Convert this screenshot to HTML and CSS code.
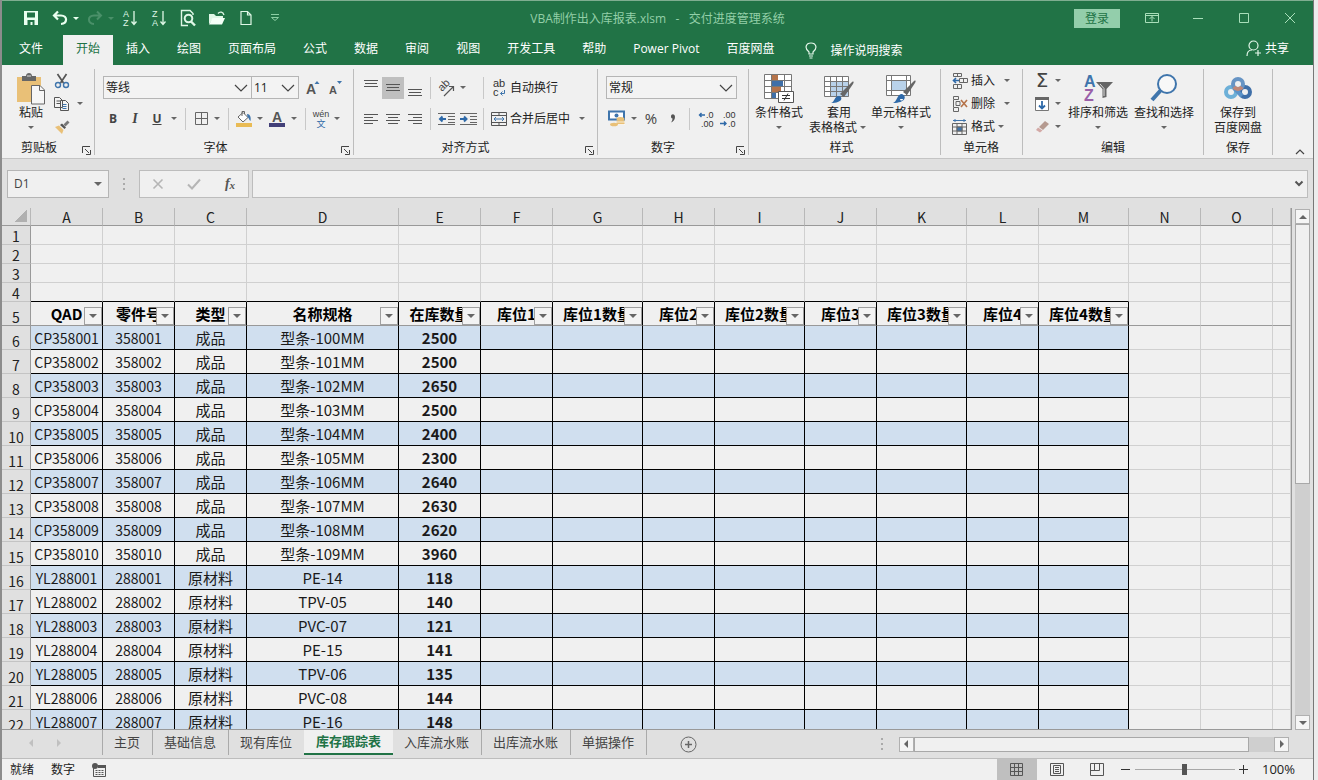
FILE: index.html
```html
<!DOCTYPE html>
<html lang="zh-CN">
<head>
    <meta charset="UTF-8">
    <meta name="viewport" content="width=device-width, initial-scale=1.0">
    <title>VBA制作出入库报表.xlsm - 交付进度管理系统</title>
    <link rel="stylesheet" href="styles.css">
</head>
<body>
    <svg class="symbols" aria-hidden="true">
        <symbol id="launcher" viewBox="0 0 9 9"><path d="M.5 7V.5H8M3 3l4 4M8.500 4v4.500H4" fill="none" stroke="#444"/></symbol>
    </svg>
    <div class="window">
        <header class="titlebar">
            <div class="quick">
                <button class="q" aria-label="保存"><svg width="16" height="16" viewBox="0 0 16 16"><path d="M1 1h14v14H1z" fill="#eafff0"/><path d="M4 2.500h8v5H4zM4.500 10h7v5h-2v-3h-2v3h-3z" fill="#217346"/></svg></button>
                <button class="q undo" aria-label="撤消"><svg width="16" height="16" viewBox="0 0 16 16"><path d="M6 1.500L2 5.500l4 4M2.500 5.500H9c7 0 6.500 8 0 8.500" fill="none" stroke="#eafff0" stroke-width="2.200"/></svg></button>
                <span class="caret light"></span>
                <button class="q redo" aria-label="恢复"><svg width="16" height="16" viewBox="0 0 16 16"><path d="M10 1.500l4 4-4 4M13.500 5.500H7c-7 0-6.500 8 0 8.500" fill="none" stroke="#4a9069" stroke-width="2"/></svg></button>
                <span class="caret dim"></span>
                <button class="q sort" aria-label="升序"><svg class="letters" width="16" height="18" viewBox="0 0 16 18"><text x="1" y="8" fill="#dff7e6">A</text><text x="1" y="17" fill="#dff7e6">Z</text><path d="M12 2v13M9.500 12.500L12 15.500l2.500-3" fill="none" stroke="#dff7e6" stroke-width="1.300"/></svg></button>
                <button class="q sort" aria-label="降序"><svg class="letters" width="16" height="18" viewBox="0 0 16 18"><text x="1" y="8" fill="#dff7e6">Z</text><text x="1" y="17" fill="#dff7e6">A</text><path d="M12 2v13M9.500 12.500L12 15.500l2.500-3" fill="none" stroke="#dff7e6" stroke-width="1.300"/></svg></button>
                <button class="q sort" aria-label="打印预览"><svg width="16" height="18" viewBox="0 0 16 18" fill="none" stroke="#dff7e6" stroke-width="1.400"><path d="M13 6V4.500L10 1.500H1.500v15H8"/><circle cx="8.500" cy="9.500" r="3.800" stroke-width="2"/><path d="M11 12.500l4 4" stroke-width="2.400"/></svg></button>
                <button class="q sort" aria-label="打开"><svg width="18" height="16" viewBox="0 0 18 16"><path d="M1 14V4h5l2 2h7v3H5z" fill="#dff7e6"/><path d="M4.500 8H17L14 14.500H1z" fill="#f4fff7"/><path d="M10 3.500c2-2.500 5-1.500 6 1.500" stroke="#dff7e6" fill="none" stroke-width="1.300"/></svg></button>
                <button class="q sort" aria-label="新建"><svg width="14" height="16" viewBox="0 0 14 16"><path d="M2 1.500h6.500l3.500 3.500v9.500H2zM8.500 1.500V5H12" fill="none" stroke="#dff7e6" stroke-width="1.200"/></svg></button>
                <button class="q sort" aria-label="自定义快速访问工具栏"><svg width="10" height="8" viewBox="0 0 10 8" fill="none" stroke="#8ccfa4"><path d="M1 .5h8M1.500 3.500h7L5 6.500z"/></svg></button>
            </div>
            <div class="title">VBA制作出入库报表.xlsm&nbsp;&nbsp; - &nbsp;&nbsp;交付进度管理系统</div>
            <div class="controls">
                <button class="login">登录</button>
                <button class="ctl" aria-label="功能区显示选项"><svg width="14" height="12" viewBox="0 0 14 12" fill="none" stroke="#a9dfba"><path d="M.5 1.500h13v9H.5zM.5 3.500h13M7 9.500v-5M4.500 7L7 4.500 9.500 7"/></svg></button>
                <button class="ctl" aria-label="最小化"><svg width="12" height="12" viewBox="0 0 12 12"><path d="M1 6.500h10" stroke="#a9dfba"/></svg></button>
                <button class="ctl" aria-label="最大化"><svg width="12" height="12" viewBox="0 0 12 12"><path d="M1.500 1.500h9v9h-9z" fill="none" stroke="#a9dfba"/></svg></button>
                <button class="ctl" aria-label="关闭"><svg width="12" height="12" viewBox="0 0 12 12"><path d="M1 1l10 10M11 1L1 11" stroke="#a9dfba"/></svg></button>
            </div>
        </header>

        <nav class="tabs">
            <button class="tab file">文件</button>
            <button class="tab active">开始</button>
            <button class="tab">插入</button>
            <button class="tab">绘图</button>
            <button class="tab">页面布局</button>
            <button class="tab">公式</button>
            <button class="tab">数据</button>
            <button class="tab">审阅</button>
            <button class="tab">视图</button>
            <button class="tab">开发工具</button>
            <button class="tab">帮助</button>
            <button class="tab">Power Pivot</button>
            <button class="tab">百度网盘</button>
            <button class="tab tell"><svg width="12" height="17" viewBox="0 0 12 17" fill="none" stroke="#e4f7ea" stroke-width="1.200"><path d="M4 12V10C-1 6 1 1 6 1s7 5 2 9v2zM4 14h4M4.500 16h3"/></svg>操作说明搜索</button>
            <button class="tab share"><svg width="16" height="17" viewBox="0 0 16 17" fill="none" stroke="#e4f7ea" stroke-width="1.200"><circle cx="7.500" cy="5.500" r="4.500"/><path d="M1 16c0-4 2-6 5-6M12 10v6M9 13h6"/></svg>共享</button>
        </nav>

        <section class="ribbon">
            <div class="group clipboard">
                <div class="body">
                    <button class="big">
                        <svg width="30" height="32" viewBox="0 0 30 32"><path d="M1 4h24v25H1z" fill="#e9c077"/><path d="M6 8V3h4c0-4 6-4 6 0h4v5z" fill="#666"/><path d="M11 3h4" stroke="#ddd"/><path d="M15.500 12.500h8.500l4.500 4.500v14h-13z" fill="#f6f6f6" stroke="#666"/><path d="M23.500 12.500v5h5" fill="none" stroke="#666"/></svg>
                        <span>粘贴</span><span class="caret"></span>
                    </button>
                    <div class="three">
                        <div class="line"><button aria-label="剪切"><svg width="16" height="16" viewBox="0 0 16 16" fill="none"><path d="M3.500 1l6 9M12.500 1l-6 9" stroke="#555" stroke-width="1.700"/><circle cx="4" cy="12" r="2.500" stroke="#3f75ac" stroke-width="1.400"/><circle cx="12" cy="12" r="2.500" stroke="#3f75ac" stroke-width="1.400"/></svg></button></div>
                        <div class="line"><button aria-label="复制"><svg width="16" height="16" viewBox="0 0 16 16" fill="#f4f4f4" stroke="#555"><path d="M.5 1.500h5l3 3v7h-8zM2.500 5h4M2.500 7.500h4M6.500 4.500h5l3 3v7h-8z"/><path d="M8.500 8.500h4M8.500 10.500h4M8.500 12.500h4" stroke="#3f75ac"/></svg></button><span class="caret"></span></div>
                        <div class="line"><button aria-label="格式刷"><svg width="16" height="16" viewBox="0 0 16 16"><path d="M1 8l4-1.500 4.500 4.500L8 15z" fill="#e9c077"/><path d="M6 6l2-1.500 4 4L10.500 10z" fill="#555"/><path d="M9.500 5.500L13.500 1.500l2 2-4 4z" fill="#777"/></svg></button></div>
                    </div>
                </div>
                <div class="label">剪贴板<button class="launch" aria-label="剪贴板设置"><svg width="9" height="9"><use href="#launcher"/></svg></button></div>
            </div>

            <div class="group font">
                <div class="body two">
                    <div class="line">
                        <select class="combo fontname" aria-label="字体"><option>等线</option></select>
                        <select class="combo fontsize" aria-label="字号"><option>11</option></select>
                        <button class="grow" aria-label="增大字号"><svg class="letters large" width="16" height="18" viewBox="0 0 16 18"><text x="2" y="15" fill="#555">A</text><path d="M10.500 5h5L13 2z" fill="#3f75ac"/></svg></button>
                        <button class="grow" aria-label="减小字号"><svg class="letters medium" width="16" height="18" viewBox="0 0 16 18"><text x="2" y="15" fill="#555">A</text><path d="M10 2h5l-2.500 3z" fill="#3f75ac"/></svg></button>
                    </div>
                    <div class="line">
                        <button class="tool"><b>B</b></button>
                        <button class="tool serif"><i>I</i></button>
                        <button class="tool"><u>U</u></button>
                        <span class="caret"></span><span class="sep"></span>
                        <button class="tool slim" aria-label="边框"><svg width="13" height="13" viewBox="0 0 13 13"><path d="M.5.500h12v12H.5zM6.500 0v13M0 6.500h13" fill="none" stroke="#666"/></svg></button>
                        <span class="caret"></span><span class="sep"></span>
                        <button class="tool slim" aria-label="填充颜色"><svg width="18" height="17" viewBox="0 0 18 17"><path d="M3 7l5-4.500 5 5-5 4.500z" fill="#fff" stroke="#666"/><path d="M7 6V1.500h2.500V4" fill="none" stroke="#666"/><path d="M12 4c4 0 4 5 3.500 7-2-1-1-3-3-4z" fill="#3f75ac"/><path d="M1 13h16v4H1z" fill="#e9bb55"/></svg></button>
                        <span class="caret"></span>
                        <button class="tool" aria-label="字体颜色"><svg class="letters large" width="16" height="17" viewBox="0 0 16 17"><text x="3" y="12" fill="#555">A</text><path d="M0 13h16v4H0z" fill="#423f78"/></svg></button>
                        <span class="caret"></span><span class="sep"></span>
                        <button class="tool slim pinyin"><span>wén</span><span class="wen">文</span></button>
                        <span class="caret"></span>
                    </div>
                </div>
                <div class="label">字体<button class="launch" aria-label="字体设置"><svg width="9" height="9"><use href="#launcher"/></svg></button></div>
            </div>

            <div class="group align">
                <div class="body two">
                    <div class="line">
                        <button class="tool" aria-label="顶端对齐"><svg width="14" height="16" viewBox="0 0 14 16"><path d="M0 .500h14M1 3.500h12M0 6.500h14" stroke="#555"/></svg></button>
                        <button class="tool on" aria-label="垂直居中"><svg width="14" height="16" viewBox="0 0 14 16"><path d="M0 4.500h14M1 7.500h12M0 10.500h14" stroke="#555"/></svg></button>
                        <button class="tool" aria-label="底端对齐"><svg width="14" height="16" viewBox="0 0 14 16"><path d="M0 9.500h14M1 12.500h12M0 15.500h14" stroke="#555"/></svg></button>
                        <span class="sep"></span>
                        <div class="mid"><button class="tool" aria-label="方向"><svg class="letters medium" width="18" height="18" viewBox="0 0 18 18"><text x="0" y="0" transform="translate(5 13) rotate(-45)" fill="#444">ab</text><path d="M7 17l9-9M12 7.500h4.500V12" fill="none" stroke="#555" stroke-width="1.200"/></svg></button><span class="caret"></span></div>
                        <span class="sep"></span>
                        <button class="text"><svg class="letters medium" width="16" height="18" viewBox="0 0 16 18"><text x="2" y="8" fill="#333">ab</text><text x="2" y="17" fill="#333">c</text><path d="M13.500 11v3.500H9.500M11.500 12.500l-2 2 2 2" fill="none" stroke="#3f75ac"/></svg>自动换行</button>
                    </div>
                    <div class="line">
                        <button class="tool" aria-label="左对齐"><svg width="14" height="12" viewBox="0 0 14 12"><path d="M0 1.500h14M0 4.500h9M0 7.500h14M0 10.500h9" stroke="#555"/></svg></button>
                        <button class="tool" aria-label="居中"><svg width="14" height="12" viewBox="0 0 14 12"><path d="M0 1.500h14M2 4.500h10M0 7.500h14M2 10.500h10" stroke="#555"/></svg></button>
                        <button class="tool" aria-label="右对齐"><svg width="14" height="12" viewBox="0 0 14 12"><path d="M0 1.500h14M5 4.500h9M0 7.500h14M5 10.500h9" stroke="#555"/></svg></button>
                        <span class="sep"></span>
                        <div class="mid">
                            <button class="tool" aria-label="减少缩进量"><svg width="17" height="14" viewBox="0 0 17 14"><path d="M0 1.500h17M10 4.500h7M10 7.500h7M10 10.500h7M0 12.500h17" stroke="#666"/><path d="M8 7H2M4.500 4.500L2 7l2.500 2.500" stroke="#2e69a8" stroke-width="2" fill="none"/></svg></button>
                            <button class="tool" aria-label="增加缩进量"><svg width="17" height="14" viewBox="0 0 17 14"><path d="M0 1.500h17M10 4.500h7M10 7.500h7M10 10.500h7M0 12.500h17" stroke="#666"/><path d="M0 7h6M4 4.500L6.500 7 4 9.500" stroke="#2e69a8" stroke-width="2" fill="none"/></svg></button>
                        </div>
                        <span class="sep"></span>
                        <button class="text"><svg width="16" height="16" viewBox="0 0 16 16" fill="none"><path d="M.5 1.500h15v13H.5zM.5 4.500h15M.5 11.500h15M8 1.500v3M8 11.500v3" stroke="#555"/><path d="M3 8h10M5 6L3 8l2 2M11 6l2 2-2 2" stroke="#3f75ac"/></svg>合并后居中</button>
                        <span class="caret after"></span>
                    </div>
                </div>
                <div class="label">对齐方式<button class="launch" aria-label="对齐设置"><svg width="9" height="9"><use href="#launcher"/></svg></button></div>
            </div>

            <div class="group number">
                <div class="body two">
                    <div class="line"><select class="combo format" aria-label="数字格式"><option>常规</option></select></div>
                    <div class="line">
                        <button class="tool" aria-label="会计数字格式"><svg width="18" height="17" viewBox="0 0 18 17"><path d="M1 1.500h15v8H1z" fill="#fff" stroke="#3f75ac" stroke-width="2"/><circle cx="8.500" cy="5.500" r="2" fill="#3f75ac"/><ellipse cx="12.500" cy="9" rx="4" ry="2" fill="#e9c077"/><path d="M8.500 10.500h8v4h-8z" fill="#e9c077"/><path d="M8 12h9M8 14.500h9" stroke="#fff" stroke-width=".7"/><ellipse cx="6" cy="14.500" rx="4" ry="1.800" fill="#e9c077"/></svg></button>
                        <span class="caret"></span>
                        <button class="tool percent">%</button>
                        <button class="tool" aria-label="千位分隔样式"><svg width="8" height="10" viewBox="0 0 8 10"><path d="M2 2.500c0-3 4-3 4 .5 0 3-2 4.500-4 5.500 1-1.500 1.500-2.500 1.500-4C2.500 4.500 2 3.500 2 2.500z" fill="#555"/></svg></button>
                        <span class="sep"></span>
                        <button class="tool" aria-label="增加小数位数"><svg class="letters" width="16" height="16" viewBox="0 0 16 16"><text x="8" y="7" fill="#333">.0</text><text x="3" y="16" fill="#333">.00</text><path d="M7 4H1.500M3.500 2l-2 2 2 2" stroke="#2e69a8" stroke-width="1.400" fill="none"/></svg></button>
                        <button class="tool" aria-label="减少小数位数"><svg class="letters" width="16" height="16" viewBox="0 0 16 16"><text x="3" y="7" fill="#333">.00</text><text x="8" y="16" fill="#333">.0</text><path d="M0 12.500h6M4 10.500l2 2-2 2" stroke="#2e69a8" stroke-width="1.400" fill="none"/></svg></button>
                    </div>
                </div>
                <div class="label">数字<button class="launch" aria-label="数字设置"><svg width="9" height="9"><use href="#launcher"/></svg></button></div>
            </div>

            <div class="group styles">
                <div class="body">
                    <button class="big">
                        <svg width="30" height="32" viewBox="0 0 30 32"><path d="M.5 1.500h27v24H.5zM.5 7.500h27M.5 13.500h27M.5 19.500h27M7.500 1.500v24M20.500 1.500v24" fill="#fff" stroke="#777"/><path d="M8 2h6v5H8zM8 14h9v5H8z" fill="#b5734a"/><path d="M8 8h11v5H8zM8 20h4v5H8z" fill="#3f6fa8"/><path d="M14.500 18.500h15v11h-15z" fill="#fff" stroke="#555"/><path d="M18 22.500h8M18 25.500h8M24 20.500l-4 7" stroke="#333"/></svg>
                        <span>条件格式</span><span class="caret"></span>
                    </button>
                    <button class="big">
                        <svg width="30" height="32" viewBox="0 0 30 32"><path d="M.5 3.500h24v20H.5z" fill="#fff"/><path d="M6 8h19v16H6z" fill="#b9d2ea"/><path d="M.5 3.500h24v20H.5zM.5 8.500h24M.5 13.500h24M.5 18.500h24M6.500 3.500v20M12.500 3.500v20M18.500 3.500v20" fill="none" stroke="#777"/><path d="M16 21L28 9c2-1 2 0 1 2l-9 13z" fill="#666"/><path d="M7 30c4-1 3-7 8-7 4 1 4 7-8 7z" fill="#2e69a8"/></svg>
                        <span>套用</span><span class="two-line">表格格式<span class="caret"></span></span>
                    </button>
                    <button class="big">
                        <svg width="30" height="32" viewBox="0 0 30 32"><path d="M.5 2.500h24v20H.5zM.5 7.500h24M.5 17.500h24M5.500 2.500v20M20.500 2.500v20" fill="#fff" stroke="#777"/><path d="M6 8h14v9H6z" fill="#b9d2ea"/><path d="M17 19L28 8c2-1 2 0 1 2l-8 12z" fill="#666"/><path d="M7 30c4-1 4-9 9-9 5 2 4 9-9 9z" fill="#2e69a8"/><path d="M14 26a1.500 1.500 0 1 0 3 0" fill="#fff"/></svg>
                        <span>单元格样式</span><span class="caret"></span>
                    </button>
                </div>
                <div class="label">样式</div>
            </div>

            <div class="group cells">
                <div class="body">
                    <div class="three">
                        <div class="line"><button class="text"><svg width="16" height="16" viewBox="0 0 16 16" fill="none" stroke="#666"><path d="M1.500 3.500v-3h8v3zM5.500.500v3M1.500 11.500h8v4h-8zM5.500 11v4.500M7.500 5.500h8v4h-8zM11.500 5.500v4"/><path d="M7 7.500H1.500M4 5L1.500 7.500 4 10" stroke="#2e69a8" stroke-width="1.600"/></svg>插入</button><span class="caret far"></span></div>
                        <div class="line"><button class="text"><svg width="16" height="16" viewBox="0 0 16 16" fill="none" stroke="#666"><path d="M1.500 3.500v-3h5v3zM1.500 11.500h5v4h-5zM1.500 4v7M4 5.500h4v4H4z"/><path d="M9 4l6 7M15 4l-6 7" stroke="#b5734a" stroke-width="1.600"/></svg>删除</button><span class="caret far"></span></div>
                        <div class="line"><button class="text"><svg width="16" height="16" viewBox="0 0 16 16" fill="none" stroke="#666"><path d="M.5 4.500h14v11H.5zM.5 8h14M.5 12h14M5 4.500v11M10 4.500v11"/><path d="M1 1.500h13M3 0v3M12 0v3" stroke="#3f75ac"/><path d="M5 8h5v4H5z" fill="#3f75ac"/></svg>格式</button><span class="caret"></span></div>
                    </div>
                </div>
                <div class="label">单元格</div>
            </div>

            <div class="group editing">
                <div class="body">
                    <div class="three">
                        <div class="line"><button class="sum" aria-label="自动求和">Σ</button><span class="caret"></span></div>
                        <div class="line"><button aria-label="填充"><svg width="16" height="16" viewBox="0 0 16 16"><path d="M1.500 1.500h13v13h-13z" fill="#fff" stroke="#777"/><path d="M1 1h14v3H1z" fill="#666"/><path d="M8 5v7.500M5 9.500l3 3 3-3" fill="none" stroke="#2e69a8" stroke-width="1.800"/></svg></button><span class="caret"></span></div>
                        <div class="line"><button aria-label="清除"><svg width="16" height="16" viewBox="0 0 16 16"><path d="M5 8l6-6 4 3-6 6z" fill="#b59a90"/><path d="M4 8.500l4.500 3L6 13.500 2 11z" fill="#d3a9a6"/></svg></button><span class="caret"></span></div>
                    </div>
                    <button class="big">
                        <svg class="letters huge" width="30" height="32" viewBox="0 0 30 32"><text x="1" y="14" fill="#3f75ac">A</text><text x="1" y="28" fill="#9a5fa8">Z</text><path d="M13 9h17l-6.500 7v8l-4 1v-9z" fill="#666"/><path d="M17 11l4 4.500V23" fill="none" stroke="#ddd"/></svg>
                        <span>排序和筛选</span><span class="caret"></span>
                    </button>
                    <button class="big">
                        <svg width="30" height="32" viewBox="0 0 30 32" fill="none" stroke="#3f75ac"><circle cx="18" cy="11" r="9" fill="#f8f8f8" stroke-width="2"/><path d="M12 17L3 27" stroke-width="4"/></svg>
                        <span>查找和选择</span><span class="caret"></span>
                    </button>
                </div>
                <div class="label">编辑</div>
            </div>

            <div class="group save">
                <div class="body">
                    <button class="big">
                        <svg width="30" height="32" viewBox="0 0 30 32" fill="none" stroke-width="4"><circle cx="8" cy="19" r="5" stroke="#6db0d8"/><circle cx="22" cy="19" r="5" stroke="#3f6fa8"/><path d="M11 15l8 8" stroke="#5a92c8"/><circle cx="15" cy="11" r="5" stroke="#6794c4"/><path d="M11 14a5 5 0 0 0 8 0" stroke="#c08878"/></svg>
                        <span>保存到</span><span>百度网盘</span>
                    </button>
                </div>
                <div class="label">保存</div>
            </div>
            <button class="collapse" aria-label="折叠功能区"><svg width="10" height="6" viewBox="0 0 10 6"><path d="M1 5l4-4 4 4" fill="none" stroke="#444" stroke-width="1.200"/></svg></button>
        </section>

        <section class="formula">
            <select class="namebox" aria-label="名称框"><option>D1</option></select>
            <span class="dots"></span>
            <div class="fx">
                <button aria-label="取消"><svg width="12" height="12" viewBox="0 0 12 12"><path d="M1.500 1.500l9 9M10.500 1.500l-9 9" stroke="#b5b5b5" stroke-width="1.600"/></svg></button>
                <button aria-label="输入"><svg width="14" height="12" viewBox="0 0 14 12"><path d="M1 6.500l4 4 8-9" fill="none" stroke="#b5b5b5" stroke-width="2"/></svg></button>
                <button class="fn"><i>f</i><i class="sub">x</i></button>
            </div>
            <div class="entry">
                <input type="text" aria-label="编辑栏">
                <svg width="10" height="8" viewBox="0 0 10 8"><path d="M1.500 1.500L5 5l3.500-3.500" fill="none" stroke="#555" stroke-width="2"/></svg>
            </div>
        </section>

        <main class="sheet">
            <div class="pane">
                <table>
                    <colgroup>
                        <col class="w-head"><col class="w72"><col class="w72"><col class="w72"><col class="w152"><col class="w82">
                        <col class="w72"><col class="w90"><col class="w72"><col class="w90"><col class="w72"><col class="w90">
                        <col class="w72"><col class="w90"><col class="w72"><col class="w72"><col>
                    </colgroup>
                    <thead><tr id="letters"></tr></thead>
                    <tbody id="rows"></tbody>
                </table>
            </div>
            <div class="vscroll">
                <button class="sb" aria-label="向上"><span class="tri up"></span></button>
                <div class="track"><div class="thumb"></div></div>
                <button class="sb" aria-label="向下"><span class="tri down"></span></button>
            </div>
        </main>

        <nav class="sheets">
            <div class="arrows"><span class="tri left"></span><span class="tri right"></span></div>
            <button class="st">主页</button>
            <button class="st">基础信息</button>
            <button class="st before">现有库位</button>
            <button class="st current">库存跟踪表</button>
            <button class="st">入库流水账</button>
            <button class="st">出库流水账</button>
            <button class="st">单据操作</button>
            <button class="add" aria-label="新工作表"><svg width="17" height="17" viewBox="0 0 17 17" fill="none" stroke="#666"><circle cx="8.500" cy="8.500" r="7.500"/><path d="M8.500 5v7M5 8.500h7" stroke-width="1.500"/></svg></button>
            <span class="dots"></span>
            <div class="hscroll">
                <button class="sb" aria-label="向左"><span class="tri left"></span></button>
                <div class="track"><div class="thumb"></div></div>
                <button class="sb" aria-label="向右"><span class="tri right"></span></button>
            </div>
        </nav>

        <footer class="status">
            <span>就绪</span>
            <span>数字</span>
            <svg width="14" height="14" viewBox="0 0 14 14"><path d="M1.500 4v9.500h12v-11H6" fill="none" stroke="#555"/><path d="M6 2h8v3H6z" fill="#555"/><circle cx="3" cy="3" r="3" fill="#555"/><path d="M3.500 7.500h2m1 0h2m1 0h2M3.500 9.500h2m1 0h2m1 0h2M3.500 11.500h2m1 0h2m1 0h2" stroke="#555"/></svg>
            <div class="views">
                <button class="view on" aria-label="普通"><svg width="13" height="13" viewBox="0 0 13 13"><path d="M.5.500h12v12H.5zM4.500 0v13M8.500 0v13M0 4.500h13M0 8.500h13" fill="none" stroke="#555"/></svg></button>
                <button class="view" aria-label="页面布局"><svg width="14" height="13" viewBox="0 0 14 13"><path d="M.5.500h13v12H.5zM3.500 2.500h7v8h-7zM5 4.500h4M5 6.500h4M5 8.500h4" fill="none" stroke="#555"/></svg></button>
                <button class="view" aria-label="分页预览"><svg width="14" height="13" viewBox="0 0 14 13"><path d="M.5.500h13v12H.5zM4.500.500v7M9.500.500v7M.5 7.500h9" fill="none" stroke="#555"/></svg></button>
            </div>
            <button class="zoom" aria-label="缩小"><svg width="9" height="9" viewBox="0 0 9 9"><path d="M0 4.500h9" stroke="#333"/></svg></button>
            <input class="slider" type="range" min="0" max="100" value="50" aria-label="缩放">
            <button class="zoom" aria-label="放大"><svg width="9" height="9" viewBox="0 0 9 9"><path d="M0 4.500h9M4.500 0v9" stroke="#333"/></svg></button>
            <span class="level">100%</span>
        </footer>
    </div>

    <script>
        const headers = ['QAD', '零件号', '类型', '名称规格', '在库数量', '库位1', '库位1数量', '库位2', '库位2数量', '库位3', '库位3数量', '库位4', '库位4数量'];
        const stock = [
            ['CP358001', '358001', '成品', '型条-100MM', 2500],
            ['CP358002', '358002', '成品', '型条-101MM', 2500],
            ['CP358003', '358003', '成品', '型条-102MM', 2650],
            ['CP358004', '358004', '成品', '型条-103MM', 2500],
            ['CP358005', '358005', '成品', '型条-104MM', 2400],
            ['CP358006', '358006', '成品', '型条-105MM', 2300],
            ['CP358007', '358007', '成品', '型条-106MM', 2640],
            ['CP358008', '358008', '成品', '型条-107MM', 2630],
            ['CP358009', '358009', '成品', '型条-108MM', 2620],
            ['CP358010', '358010', '成品', '型条-109MM', 3960],
            ['YL288001', '288001', '原材料', 'PE-14', 118],
            ['YL288002', '288002', '原材料', 'TPV-05', 140],
            ['YL288003', '288003', '原材料', 'PVC-07', 121],
            ['YL288004', '288004', '原材料', 'PE-15', 141],
            ['YL288005', '288005', '原材料', 'TPV-06', 135],
            ['YL288006', '288006', '原材料', 'PVC-08', 144],
            ['YL288007', '288007', '原材料', 'PE-16', 148]
        ];
        const colCount = 16;

        // Column letters, the last column is cut off by the scrollbar
        let letters = '<th class="corner"></th>';
        for (let c = 0; c < colCount; c++) {
            letters += `<th>${c < 15 ? String.fromCharCode(65 + c) : ''}</th>`;
        }
        document.getElementById('letters').innerHTML = letters;

        function buildRow(number, className, cell) {
            let html = `<tr class="${className}"><th>${number}</th>`;
            for (let c = 0; c < colCount; c++) {
                html += c < headers.length ? `<td class="in c${c}">${cell(c)}</td>` : '<td></td>';
            }
            return html + '</tr>';
        }

        let rows = '';
        for (let r = 1; r <= 4; r++) {
            rows += buildRow(r, r === 4 ? 'blank last' : 'blank', () => '');
        }
        rows += buildRow(5, 'head', c => `${headers[c]}<button class="filter" aria-label="筛选${headers[c]}"><span class="tri down"></span></button>`);
        stock.forEach((item, i) => {
            rows += buildRow(i + 6, i % 2 === 0 ? 'data band' : 'data', c => item[c] ?? '');
        });
        document.getElementById('rows').innerHTML = rows;
    </script>
</body>
</html>
```

FILE: styles.css
```css
* {
    box-sizing: border-box;
}

body {
    margin: 0;
    background-color: #ececec;
    font-family: "Open Sans", "Noto Sans CJK SC", sans-serif;
    font-size: 12px;
    line-height: 15px;
    color: #222;
}

button {
    display: flex;
    align-items: center;
    justify-content: center;
    padding: 0;
    border: 0;
    background: none;
    font: inherit;
    color: inherit;
    white-space: nowrap;
}

svg {
    flex: none;
}

.symbols {
    display: none;
}

/* Letters inside icons */
.letters {
    overflow: visible;
    font-family: "Liberation Sans", sans-serif;
    font-size: 9px;
}

.letters.medium {
    font-size: 11px;
}

.letters.large {
    font-size: 14px;
}

.letters.medium,
.letters.large {
    font-weight: bold;
}

.align .letters {
    font-weight: normal;
}

.letters.huge {
    font-size: 16px;
    font-weight: bold;
}

.window {
    display: flex;
    flex-direction: column;
    height: 100vh;
    margin-right: 4px;
    border-left: 2px solid #8c8c8c;
    border-right: 1px solid #777;
    background-color: #e0e0e0;
    overflow: hidden;
}

/* Title bar */
.titlebar {
    display: grid;
    grid-template-columns: 1fr auto 1fr;
    align-items: center;
    flex: none;
    height: 35px;
    border-top: 1px solid #7fae91;
    background-color: #217346;
}

.quick {
    display: flex;
    align-items: center;
    padding-left: 19px;
}

.q {
    width: 20px;
    height: 20px;
}

.undo {
    margin-left: 9px;
}

.redo {
    margin-left: 3px;
}

.sort {
    margin-left: 9px;
}

.redo + .caret + .sort {
    margin-left: 3px;
}

.title {
    color: #93cfa8;
}

.controls {
    display: flex;
    align-items: center;
    justify-content: flex-end;
}

.login {
    width: 46px;
    height: 19px;
    margin-right: 9px;
    background-color: #93ceab;
    color: #217346;
}

.ctl {
    width: 46px;
    height: 24px;
}

/* Ribbon tabs */
.tabs {
    display: flex;
    flex: none;
    height: 30px;
    padding-left: 4px;
    background-color: #217346;
    color: #fff;
}

.tab {
    margin-right: 1px;
    padding: 0 13px 3px;
}

.file {
    margin-right: 7px;
}

.tab.active {
    margin-right: 0;
    background-color: #f0f0f0;
    color: #217346;
}

.tell {
    gap: 13px;
    padding-left: 17px;
    padding-bottom: 0;
}

.share {
    gap: 3px;
    margin-left: auto;
    margin-right: 11px;
}

/* Ribbon */
.ribbon {
    display: flex;
    flex: none;
    height: 94px;
    padding: 4px 0 3px;
    border-bottom: 1px solid #c4c4c4;
    background-color: #f0f0f0;
}

.group {
    display: flex;
    flex-direction: column;
    flex: none;
    border-right: 1px solid #bdbdbd;
}

.body {
    display: flex;
    height: 72px;
}

.body.two {
    flex-direction: column;
    padding-top: 3px;
}

.line {
    display: flex;
    align-items: center;
    height: 31px;
}

.three .line {
    height: 23px;
}

.label {
    position: relative;
    padding-top: 1px;
    text-align: center;
}

.launch {
    position: absolute;
    right: 3px;
    bottom: 0;
}

.caret {
    display: flex;
    justify-content: center;
    flex: none;
    width: 12px;
}

.caret::before {
    content: "";
    border: 3px solid transparent;
    border-top-color: #666;
    border-bottom: 0;
}

.caret.light::before {
    border-top-color: #eafff0;
}

.caret.dim::before {
    border-top-color: #4a9069;
}

.sep {
    flex: none;
    width: 1px;
    height: 22px;
    margin: 0 5px;
    background-color: #c8c8c8;
}

.tool {
    flex: none;
    width: 22px;
    height: 22px;
    color: #444;
}

.tool.slim {
    width: 20px;
}

.tool.on {
    background-color: #bfbfbf;
}

.serif {
    font-family: "Liberation Serif", serif;
    font-size: 14px;
    font-weight: bold;
}

.tool u {
    font-weight: bold;
}

.pinyin {
    flex-direction: column;
    font-family: "Liberation Sans", "Noto Sans CJK SC", sans-serif;
    font-size: 9px;
    line-height: 10px;
}

.wen {
    color: #2e69a8;
}

.percent {
    font-size: 15px;
}

.text {
    gap: 3px;
}

.combo,
.namebox {
    appearance: none;
    border: 1px solid #b5b5b5;
    border-radius: 0;
    background-color: #f3f3f3;
    font: inherit;
    color: inherit;
}

.combo {
    height: 23px;
    padding: 0 2px;
    background-image: url("data:image/svg+xml,%3Csvg xmlns='http://www.w3.org/2000/svg' width='14' height='8'%3E%3Cpath d='M1 1l6 6 6-6' fill='none' stroke='%23444' stroke-width='1.200'/%3E%3C/svg%3E");
    background-repeat: no-repeat;
    background-position: right 3px center;
}

.big {
    flex-direction: column;
    justify-content: flex-start;
    padding-top: 4px;
}

.big > .caret {
    height: 15px;
    align-items: center;
}

.two-line {
    display: flex;
    align-items: center;
}

.clipboard {
    width: 93px;
}

.clipboard .big {
    width: 44px;
    margin-left: 7px;
}

.clipboard .label {
    padding-right: 18px;
}

.clipboard .three button {
    width: 18px;
}

.clipboard .three .caret {
    margin-left: 3px;
}

.font {
    width: 259px;
    padding-left: 7px;
}

.font .label {
    padding-right: 24px;
}

.fontname {
    width: 149px;
    margin-left: 1px;
}

.fontsize {
    width: 48px;
    margin-left: -1px;
}

.grow {
    width: 20px;
    margin-left: 3px;
}

.align {
    width: 244px;
    padding-left: 6px;
}

.align .label {
    padding-right: 26px;
}

.align .sep {
    margin: 0 4px;
}

.mid {
    display: flex;
    align-items: center;
    width: 44px;
}

.align .text {
    margin-left: 3px;
}

.after {
    margin-left: 6px;
}

.number {
    width: 151px;
    padding-left: 8px;
}

.number .label {
    padding-right: 28px;
}

.format {
    width: 131px;
}

.styles {
    width: 192px;
}

.styles .big {
    width: 60px;
}

.styles .big:last-child {
    width: 64px;
}

.styles .label {
    padding-right: 6px;
}

.cells {
    width: 82px;
    padding-left: 11px;
}

.cells .label {
    padding-right: 12px;
}

.far {
    margin-left: 6px;
}

.editing {
    width: 181px;
}

.editing .three {
    margin-left: 11px;
}

.editing .three button {
    width: 16px;
}

.editing .three .caret {
    margin-left: 2px;
}

.sum {
    font-family: "DejaVu Sans", sans-serif;
    font-size: 20px;
    color: #444;
}

.editing .big {
    width: 66px;
}

.editing .three + .big {
    margin-left: 1px;
}

.save {
    width: 69px;
}

.save .big {
    width: 100%;
}

.collapse {
    align-self: flex-end;
    width: 10px;
    margin: 0 8px 0 auto;
}

/* Formula bar */
.formula {
    display: flex;
    align-items: center;
    flex: none;
    height: 49px;
    padding: 0 5px;
}

.namebox {
    width: 102px;
    height: 28px;
    padding: 0 6px;
    background-image: url("data:image/svg+xml,%3Csvg xmlns='http://www.w3.org/2000/svg' width='8' height='4'%3E%3Cpath d='M0 0h8L4 4z' fill='%23666'/%3E%3C/svg%3E");
    background-repeat: no-repeat;
    background-position: right 6px center;
    background-color: #f0f0f0;
    font-size: 12px;
    color: #444;
}

.dots {
    width: 2px;
    height: 12px;
    background: repeating-linear-gradient(#aaa 0 2px, transparent 2px 5px);
}

.formula .dots {
    margin: 0 14px;
}

.fx,
.entry {
    display: flex;
    align-items: center;
    height: 28px;
    border: 1px solid #bdbdbd;
    background-color: #f0f0f0;
}

.fx {
    width: 110px;
}

.fx button {
    flex: 1;
}

.fn {
    font-family: "Liberation Serif", serif;
    font-size: 14px;
    font-weight: bold;
    color: #555;
}

.sub {
    padding-top: 3px;
    font-size: 11px;
}

.entry {
    flex: 1;
    margin-left: 3px;
    padding-right: 3px;
}

.entry input {
    flex: 1;
    min-width: 0;
    border: 0;
    background: none;
    font: inherit;
}

/* Grid */
.sheet {
    display: flex;
    flex: 1;
    min-height: 0;
}

.pane {
    flex: 1;
    min-width: 0;
    overflow: hidden;
    border-right: 1px solid #999;
    border-bottom: 1px solid #999;
    background-color: #f0f0f0;
}

table {
    width: 100%;
    table-layout: fixed;
    border-collapse: separate;
    border-spacing: 0;
    font-family: "Noto Sans CJK SC", sans-serif;
    font-size: 15px;
    line-height: 17px;
}

.w-head { width: 29px; }
.w72 { width: 72px; }
.w82 { width: 82px; }
.w90 { width: 90px; }
.w152 { width: 152px; }

th {
    height: 18px;
    padding: 0;
    border-right: 1px solid #b8b8b8;
    border-bottom: 1px solid #999;
    background-color: #e0e0e0;
    font-weight: normal;
    font-size: 14px;
    line-height: 15px;
    vertical-align: bottom;
}

.corner {
    background-image: linear-gradient(135deg, transparent 50%, #b0b0b0 50%);
    background-size: 12px 12px;
    background-repeat: no-repeat;
    background-position: right 3px bottom 3px;
}

tbody th {
    height: auto;
    border-right-color: #999;
    border-bottom-color: #c4c4c4;
}

td {
    position: relative;
    height: 19px;
    padding: 0;
    border-right: 1px solid #d0d0d0;
    border-bottom: 1px solid #d0d0d0;
    text-align: center;
    white-space: nowrap;
    overflow: hidden;
}

.last .in {
    border-bottom-color: #000;
}

.head td,
.data td {
    height: 24px;
}

.head .in,
.data .in {
    border-right-color: #000;
    color: #000;
}

.data .in {
    border-bottom-color: #000;
    color: #1a1a1a;
}

.head th,
.head td {
    border-bottom-color: #999;
}

.head td {
    font-weight: bold;
}

.data .c0,
.data .c1 {
    padding-top: 2px;
    font-size: 14px;
}

.data .c4 {
    font-weight: bold;
}

.band .in {
    background-color: #d0dfef;
}

.filter {
    position: absolute;
    right: 0;
    bottom: 0;
    width: 18px;
    height: 18px;
    border: 1px solid #a0a0a0;
    background-color: #f3f3f3;
}

/* Scrollbars */
.tri {
    border: 4px solid transparent;
}

.tri.down { border-top-color: #666; border-bottom: 0; }
.tri.up { border-bottom-color: #666; border-top: 0; }
.tri.left { border-right-color: #666; border-left: 0; }
.tri.right { border-left-color: #666; border-right: 0; }

.vscroll {
    display: flex;
    flex-direction: column;
    width: 21px;
    padding: 1px 3px 0;
}

.sb {
    flex: none;
    width: 15px;
    height: 15px;
    border: 1px solid #b0b0b0;
    background-color: #f5f5f5;
}

.track {
    flex: 1;
    background-color: #cfcfcf;
}

.thumb {
    border: 1px solid #a8a8a8;
    background-color: #f0f0f0;
}

.vscroll .thumb {
    height: 53%;
}

/* Sheet tabs */
.sheets {
    display: flex;
    flex: none;
    height: 28px;
    font-size: 13px;
    color: #444;
}

.arrows {
    display: flex;
    align-items: center;
    gap: 24px;
    width: 101px;
    height: 25px;
    padding-left: 27px;
    border-right: 1px solid #aaa;
}

.arrows .left { border-right-color: #c0c0c0; }
.arrows .right { border-left-color: #c0c0c0; }

.st {
    height: 25px;
    padding: 0 12px 0 11px;
    border-right: 1px solid #aaa;
}

.before {
    border-right: 0;
}

.current {
    padding: 0 12px;
    border-right: 0;
    border-bottom: 2px solid #217346;
    background-color: #f0f0f0;
    color: #217346;
    font-weight: bold;
}

.add {
    width: 17px;
    margin-left: 33px;
}

.sheets .dots {
    align-self: center;
    margin-left: auto;
    margin-right: 16px;
}

.hscroll {
    display: flex;
    align-items: center;
    width: calc(30% - 3px);
    margin-right: 24px;
}

.hscroll .track {
    height: 15px;
}

.hscroll .thumb {
    width: 93%;
    height: 15px;
}

/* Status bar */
.status {
    display: flex;
    align-items: center;
    flex: none;
    height: 22px;
    padding: 0 18px 0 8px;
    border-top: 1px solid #bdbdbd;
    background-color: #f0f0f0;
}

.status > span {
    margin-right: 17px;
}

.views {
    display: flex;
    align-self: stretch;
    margin-left: auto;
}

.view {
    width: 40px;
}

.view.on {
    background-color: #bfbfbf;
}

.zoom {
    width: 10px;
    margin: 0 4px;
}

.slider {
    appearance: none;
    width: 100px;
    height: 12px;
    margin: 0;
    background: linear-gradient(#a8a8a8, #a8a8a8) center / 100% 1px no-repeat;
}

.slider::-webkit-slider-thumb {
    appearance: none;
    width: 5px;
    height: 11px;
    background-color: #555;
}

.status > .level {
    margin: 0 0 0 9px;
    font-size: 13px;
}
```
